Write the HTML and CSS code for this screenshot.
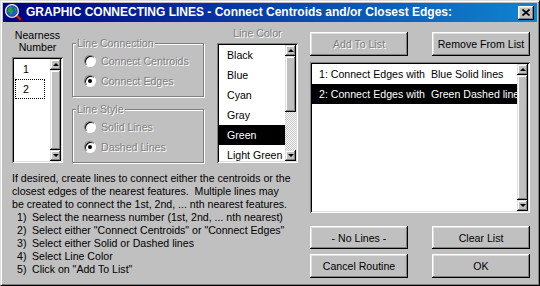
FILE: index.html
```html
<!DOCTYPE html>
<html>
	<head>
		<meta charset="UTF-8">
		<title>Graphic Connecting Lines</title>
		<link rel="stylesheet" href="styles.css">
	</head>
	<body>
		<div class="dialog">
			<div class="titlebar">
				<svg class="app-icon" width="17" height="17" viewBox="0 0 17 17">
					<line x1="10.5" y1="10.5" x2="15.5" y2="15.5" stroke="#600000" stroke-width="3.4" stroke-linecap="round"/>
					<line x1="10.5" y1="10.5" x2="15" y2="15" stroke="#d02020" stroke-width="1.8" stroke-linecap="round"/>
					<circle cx="7" cy="7" r="6.3" fill="none" stroke="#e0e0e0" stroke-width="1.6"/>
					<circle cx="7" cy="7" r="5.4" fill="#1c5cc8"/>
					<path d="M3.2 4.2 L5.6 2.6 L7.4 3.6 L6.6 5.6 L8.2 7 L7.2 9.6 L5.4 10.8 L4.6 8.6 L3 7.4 Z" fill="#28a030"/>
					<path d="M9 3.4 L11 4.2 L11.8 6.4 L10.2 6.8 Z" fill="#28a030"/>
				</svg>
				<span class="title">GRAPHIC CONNECTING LINES - Connect Centroids and/or Closest Edges:</span>
				<div class="close-btn">
					<svg width="8" height="7" viewBox="0 0 8 7">
						<path d="M0.5 0.5 L7.5 6.5 M7.5 0.5 L0.5 6.5" stroke="#000" stroke-width="1.7"/>
					</svg>
				</div>
			</div>

			<div class="dialog-body">
				<div class="left-pane">
					<div class="options">
						<!-- nearness number -->
						<div class="col-nearness">
							<div class="col-label">Nearness<br>Number</div>
							<div class="listbox nearness-list">
								<div class="list-items">
									<div class="item near-item">1</div>
									<div class="item near-item focused">2</div>
								</div>
								<div class="scrollbar">
									<div class="sb-btn up"></div>
									<div class="sb-track"><div class="sb-thumb" style="height: 100%;"></div></div>
									<div class="sb-btn down"></div>
								</div>
							</div>
						</div>

						<!-- line connection / line style -->
						<div class="col-groups">
							<fieldset class="group">
								<legend class="disabled">Line Connection</legend>
								<div class="radio-row disabled"><span class="radio"></span>Connect Centroids</div>
								<div class="radio-row disabled"><span class="radio checked"></span>Connect Edges</div>
							</fieldset>
							<fieldset class="group group-style">
								<legend class="disabled">Line Style</legend>
								<div class="radio-row disabled"><span class="radio"></span>Solid Lines</div>
								<div class="radio-row disabled"><span class="radio checked"></span>Dashed Lines</div>
							</fieldset>
						</div>

						<!-- line color -->
						<div class="col-color">
							<div class="col-label disabled">Line Color</div>
							<div class="listbox color-list">
								<div class="list-items">
									<div class="item">Black</div>
									<div class="item">Blue</div>
									<div class="item">Cyan</div>
									<div class="item">Gray</div>
									<div class="item selected">Green</div>
									<div class="item">Light Green</div>
								</div>
								<div class="scrollbar">
									<div class="sb-btn up"></div>
									<div class="sb-track"><div class="sb-thumb" style="height: 60%;"></div></div>
									<div class="sb-btn down"></div>
								</div>
							</div>
						</div>
					</div>

					<div class="help">
						<p>If desired, create lines to connect either the centroids or the<br>closest edges of the nearest features.&nbsp; Multiple lines may<br>be created to connect the 1st, 2nd, ... nth nearest features.</p>
						<div class="step"><span class="num">1)</span>Select the nearness number (1st, 2nd, ... nth nearest)</div>
						<div class="step"><span class="num">2)</span>Select either "Connect Centroids" or "Connect Edges"</div>
						<div class="step"><span class="num">3)</span>Select either Solid or Dashed lines</div>
						<div class="step"><span class="num">4)</span>Select Line Color</div>
						<div class="step"><span class="num">5)</span>Click on "Add To List"</div>
					</div>
				</div>

				<div class="right-pane">
					<div class="btn-row">
						<div class="btn disabled">Add To List</div>
						<div class="btn">Remove From List</div>
					</div>
					<div class="listbox main-list">
						<div class="list-items">
							<div class="item">1: Connect Edges with  Blue Solid lines</div>
							<div class="item selected">2: Connect Edges with  Green Dashed lines</div>
						</div>
						<div class="scrollbar">
							<div class="sb-btn up"></div>
							<div class="sb-track"><div class="sb-thumb" style="height: 100%;"></div></div>
							<div class="sb-btn down"></div>
						</div>
					</div>
					<div class="btn-row btn-row-low">
						<div class="btn">- No Lines -</div>
						<div class="btn">Clear List</div>
					</div>
					<div class="btn-row btn-row-last">
						<div class="btn">Cancel Routine</div>
						<div class="btn">OK</div>
					</div>
				</div>
			</div>
		</div>
	</body>
</html>
```

FILE: styles.css
```css
body {
	margin: 0;
	background-color: #c0c0c0;
	font-family: "Liberation Sans", Arial, sans-serif;
	font-size: 10.6px;
	color: #000;
}

.dialog {
	width: 540px;
	height: 286px;
	box-sizing: border-box;
	background-color: #c0c0c0;
	border: 1px solid;
	border-color: #dfdfdf #000 #000 #dfdfdf;
	box-shadow: inset 1px 1px #fff, inset -1px -1px #808080;
	padding: 2px;
	display: flex;
	flex-direction: column;
}

/* title bar */
.titlebar {
	height: 19px;
	flex: none;
	display: flex;
	align-items: center;
	padding: 0 3px 0 2px;
	background: linear-gradient(90deg, #000080, #1084d0);
	color: #fff;
}

.app-icon {
	flex: none;
}

.title {
	flex: 1;
	margin-left: 4px;
	font-size: 12px;
	font-weight: bold;
	white-space: nowrap;
	line-height: 19px;
}

.close-btn {
	width: 16px;
	height: 14px;
	display: flex;
	align-items: center;
	justify-content: center;
	background-color: #c0c0c0;
	box-shadow: inset -1px -1px #000, inset 1px 1px #fff, inset -2px -2px #808080, inset 2px 2px #dfdfdf;
}

/* body */
.dialog-body {
	flex: 1;
	display: flex;
	padding: 0 7px 0 9px;
}

.left-pane {
	width: 286px;
}

.right-pane {
	width: 220px;
	margin-left: 12px;
	padding-top: 10px;
}

.options {
	display: flex;
}

.col-nearness {
	width: 51px;
	padding-top: 7px;
}

.col-groups {
	width: 132px;
	margin-left: 9px;
	padding-top: 15px;
}

.col-color {
	width: 81px;
	margin-left: 13px;
	padding-top: 5px;
}

.col-label {
	line-height: 12px;
	text-align: center;
}

.disabled {
	color: #808080;
	text-shadow: 1px 1px 0 #fff;
}

/* list boxes */
.listbox {
	display: flex;
	box-sizing: border-box;
	padding: 2px;
	margin-top: 4px;
	background-color: #fff;
	box-shadow: inset 1px 1px #808080, inset -1px -1px #fff, inset 2px 2px #000, inset -2px -2px #dfdfdf;
}

.nearness-list {
	height: 106px;
}

.color-list {
	height: 120px;
}

.main-list {
	height: 151px;
	margin-top: 6px;
}

.list-items {
	flex: 1;
	overflow: hidden;
}

.item {
	height: 20px;
	line-height: 20px;
	padding-left: 8px;
	white-space: pre;
}

.main-list .item {
	padding-left: 7px;
}

.item.selected {
	background-color: #000;
	color: #fff;
}

.near-item {
	width: 30px;
	box-sizing: border-box;
	margin-left: 1px;
	padding-left: 7px;
	border: 1px solid transparent;
	line-height: 18px;
}

.near-item.focused {
	border: 1px dotted #000;
}

/* scroll bars */
.scrollbar {
	width: 11px;
	flex: none;
	display: flex;
	flex-direction: column;
}

.sb-btn {
	height: 11px;
	flex: none;
	display: flex;
	align-items: center;
	justify-content: center;
	background-color: #c0c0c0;
	box-shadow: inset -1px -1px #000, inset 1px 1px #dfdfdf, inset -2px -2px #808080, inset 2px 2px #fff;
}

.sb-btn::after {
	content: "";
	width: 0;
	height: 0;
	border-left: 3px solid transparent;
	border-right: 3px solid transparent;
}

.sb-btn.up::after {
	border-bottom: 3px solid #000;
}

.sb-btn.down::after {
	border-top: 3px solid #000;
}

.sb-track {
	flex: 1;
	background: repeating-conic-gradient(#c0c0c0 0 25%, #fff 0 50%) 0 0 / 2px 2px;
}

.sb-thumb {
	box-sizing: border-box;
	background-color: #c0c0c0;
	box-shadow: inset -1px -1px #000, inset 1px 1px #dfdfdf, inset -2px -2px #808080, inset 2px 2px #fff;
}

/* group boxes */
.group {
	margin: 0;
	padding: 1px 0 5px 0;
	border: 1px solid #808080;
	box-shadow: inset 1px 1px #fff, 1px 1px #fff;
}

.group-style {
	margin-top: 6px;
}

.group legend {
	margin-left: 3px;
	padding: 0 1px;
	line-height: 13px;
	background-color: #c0c0c0;
}

.radio-row {
	height: 20px;
	display: flex;
	align-items: center;
	padding-left: 11px;
}

.radio {
	width: 12px;
	height: 12px;
	box-sizing: border-box;
	margin-right: 5px;
	border-radius: 50%;
	border: 1px solid;
	border-color: #808080 #fff #fff #808080;
	background-color: #fff;
	box-shadow: inset 1px 1px #000;
	display: flex;
	align-items: center;
	justify-content: center;
}

.radio.checked::after {
	content: "";
	width: 4px;
	height: 4px;
	border-radius: 50%;
	background-color: #000;
}

/* help text */
.help {
	margin-top: 9px;
	line-height: 13px;
	white-space: nowrap;
}

.help p {
	margin: 0;
}

.step {
	padding-left: 5px;
}

.step .num {
	display: inline-block;
	width: 15px;
}

/* buttons */
.btn-row {
	display: flex;
	justify-content: space-between;
}

.btn-row-low {
	margin-top: 13px;
}

.btn-row-last {
	margin-top: 5px;
}

.btn {
	width: 98px;
	height: 24px;
	display: flex;
	align-items: center;
	justify-content: center;
	background-color: #c0c0c0;
	box-shadow: inset -1px -1px #000, inset 1px 1px #fff, inset -2px -2px #808080, inset 2px 2px #dfdfdf;
	white-space: nowrap;
}

.btn-row-low .btn {
	height: 23px;
}
```
